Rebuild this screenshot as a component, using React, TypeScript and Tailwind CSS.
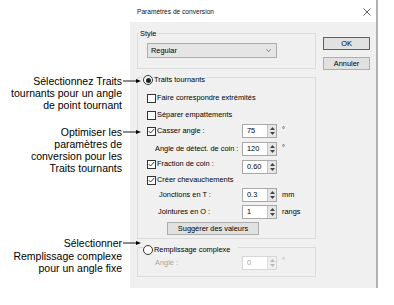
import React from "react"

const Check = ({ checked }: { checked?: boolean }) => (
  <span className="flex h-[9px] w-[9px] shrink-0 items-center justify-center border border-[#333] bg-white">
    {checked && (
      <svg width="7" height="6" viewBox="0 0 7 6">
        <path d="M0.7 3.1 L2.6 5 L6.3 0.9" fill="none" stroke="#222" strokeWidth="0.9" />
      </svg>
    )}
  </span>
)

const Radio = ({ checked }: { checked?: boolean }) => (
  <span className="flex h-[10px] w-[10px] shrink-0 items-center justify-center rounded-full border border-[#333] bg-white">
    {checked && <span className="h-[5px] w-[5px] rounded-full bg-[#222]" />}
  </span>
)

const Spin = ({ value, disabled }: { value: string; disabled?: boolean }) => (
  <div className={`flex h-[14px] w-[35px] shrink-0 border ${disabled ? "border-[#d6d6d6]" : "border-[#a8a8a8]"} bg-white`}>
    <div className={`flex flex-1 items-center pl-[4px] ${disabled ? "text-[#a6a6a6]" : "text-black"}`}>{value}</div>
    <div className={`flex w-[9px] flex-col items-center justify-center gap-[2px] border-l ${disabled ? "border-[#dedede] bg-[#f0f0f0]" : "border-[#c4c4c4] bg-[#e6e6e6]"}`}>
      <svg width="5" height="3" viewBox="0 0 5 3">
        <path d="M0 3 L2.5 0 L5 3 Z" fill={disabled ? "#b8b8b8" : "#444"} />
      </svg>
      <svg width="5" height="3" viewBox="0 0 5 3">
        <path d="M0 0 L2.5 3 L5 0 Z" fill={disabled ? "#b8b8b8" : "#444"} />
      </svg>
    </div>
  </div>
)

const Arrow = () => (
  <svg className="absolute left-full top-1/2 -translate-y-1/2" width="19" height="5" viewBox="0 0 19 5">
    <line x1="1" y1="2.5" x2="15" y2="2.5" stroke="#000" strokeWidth="0.9" />
    <path d="M14 0.6 L19 2.5 L14 4.4 Z" fill="#000" />
  </svg>
)

export default function App() {
  return (
    <div className="flex h-[305px] w-[394px] bg-white font-['Liberation_Sans',Arial,sans-serif]">
      {/* callouts */}
      <div className="flex w-[130px] shrink-0 flex-col text-[10.5px] text-black">
        <div className="mt-[75px] w-[122px] text-right leading-[12px]">
          <div className="relative">
            Sélectionnez Traits
            <Arrow />
          </div>
          <div>tournants pour un angle</div>
          <div>de point tournant</div>
        </div>
        <div className="mt-[15px] w-[122px] text-right leading-[12px]">
          <div className="relative">
            Optimiser les
            <Arrow />
          </div>
          <div>paramètres de</div>
          <div>conversion pour les</div>
          <div>Traits tournants</div>
        </div>
        <div className="mt-[63px] w-[122px] text-right leading-[12.5px]">
          <div className="relative">
            Sélectionner
            <Arrow />
          </div>
          <div>Remplissage complexe</div>
          <div>pour un angle fixe</div>
        </div>
      </div>

      {/* dialog */}
      <div className="flex h-[288px] w-[248px] shrink-0 flex-col border-r-2 border-[#b2b2b2] text-[7.4px] leading-[10px] text-black">
        <div className="flex h-[22px] items-center justify-between bg-white pl-[7px] pr-[5px] pt-[2px]">
          <span className="text-[6.6px] text-[#111]">Paramètres de conversion</span>
          <svg width="8" height="8" viewBox="0 0 8 8">
            <path d="M0.5 0.5 L7.5 7.5 M7.5 0.5 L0.5 7.5" stroke="#333" strokeWidth="0.8" />
          </svg>
        </div>

        <div className="flex flex-1 bg-[#f0f0f0] px-[7px] pt-[11px]">
          <div className="flex w-[179px] shrink-0 flex-col">
            {/* Style */}
            <div className="flex h-[36px] flex-col border border-[#dcdcdc]">
              <span className="-mt-[4px] ml-[1px] w-fit bg-[#f0f0f0] px-[1px] leading-[8px]">Style</span>
              <div className="ml-[9px] mt-[5px] flex h-[15px] w-[130px] items-center justify-between border border-[#adadad] bg-[#e5e5e5] pl-[3px] pr-[5px]">
                <span>Regular</span>
                <svg width="5" height="3" viewBox="0 0 5 3">
                  <path d="M0.3 0.3 L2.5 2.6 L4.7 0.3" fill="none" stroke="#555" strokeWidth="0.7" />
                </svg>
              </div>
            </div>

            {/* Traits tournants */}
            <div className="mt-[8px] flex h-[162px] flex-col border border-[#dcdcdc]">
              <div className="-mt-[3px] ml-[5px] flex h-[10px] w-fit items-center gap-[1px] bg-[#f0f0f0] pr-[1px]">
                <Radio checked />
                <span>Traits tournants</span>
              </div>
              <div className="ml-[9px] mt-[8px] flex h-[10px] items-center gap-[1px]">
                <Check />
                <span>Faire correspondre extrémités</span>
              </div>
              <div className="ml-[9px] mt-[7px] flex h-[10px] items-center gap-[1px]">
                <Check />
                <span>Séparer empattements</span>
              </div>
              <div className="ml-[9px] mt-[4px] flex h-[14px] items-center">
                <div className="flex w-[95px] items-center gap-[1px]">
                  <Check checked />
                  <span>Casser angle :</span>
                </div>
                <Spin value="75" />
                <span className="ml-[5px] -mt-[3px]">°</span>
              </div>
              <div className="ml-[9px] mt-[4px] flex h-[14px] items-center">
                <div className="w-[95px] pl-[8px]">Angle de détect. de coin :</div>
                <Spin value="120" />
                <span className="ml-[5px] -mt-[3px]">°</span>
              </div>
              <div className="ml-[9px] mt-[4px] flex h-[14px] items-start">
                <div className="mt-[-1px] flex w-[95px] items-center gap-[1px]">
                  <Check checked />
                  <span>Fraction de coin :</span>
                </div>
                <Spin value="0.60" />
              </div>
              <div className="ml-[9px] mt-[1px] flex h-[10px] items-center gap-[1px]">
                <Check checked />
                <span>Créer chevauchements</span>
              </div>
              <div className="ml-[9px] mt-[3px] flex h-[14px] items-center">
                <div className="w-[95px] pl-[12px]">Jonctions en T :</div>
                <Spin value="0.3" />
                <span className="ml-[5px]">mm</span>
              </div>
              <div className="ml-[9px] mt-[3px] flex h-[14px] items-center">
                <div className="w-[95px] pl-[11px]">Jointures en O :</div>
                <Spin value="1" />
                <span className="ml-[5px]">rangs</span>
              </div>
              <div className="ml-[29px] mt-[3px] flex h-[13px] w-[92px] items-center justify-center border border-[#adadad] bg-[#e1e1e1]">
                Suggérer des valeurs
              </div>
            </div>

            {/* Remplissage complexe */}
            <div className="mt-[8px] flex h-[30px] flex-col border border-[#dcdcdc]">
              <div className="-mt-[3px] ml-[5px] flex h-[10px] w-fit items-center gap-[1px] bg-[#f0f0f0] pr-[8px]">
                <Radio />
                <span>Remplissage complexe</span>
              </div>
              <div className="ml-[9px] mt-[1px] flex h-[13px] items-center text-[#a6a6a6]">
                <div className="w-[95px] pl-[8px]">Angle :</div>
                <Spin value="0" disabled />
                <span className="ml-[5px] -mt-[3px]">°</span>
              </div>
            </div>
          </div>

          {/* buttons */}
          <div className="ml-[7px] flex flex-col gap-[7px] pt-[4px]">
            <div className="flex h-[13px] w-[47px] items-center justify-center border border-[#0078d7] bg-[#e1e1e1]">OK</div>
            <div className="flex h-[13px] w-[47px] items-center justify-center border border-[#adadad] bg-[#e1e1e1]">Annuler</div>
          </div>
        </div>
      </div>
    </div>
  )
}
